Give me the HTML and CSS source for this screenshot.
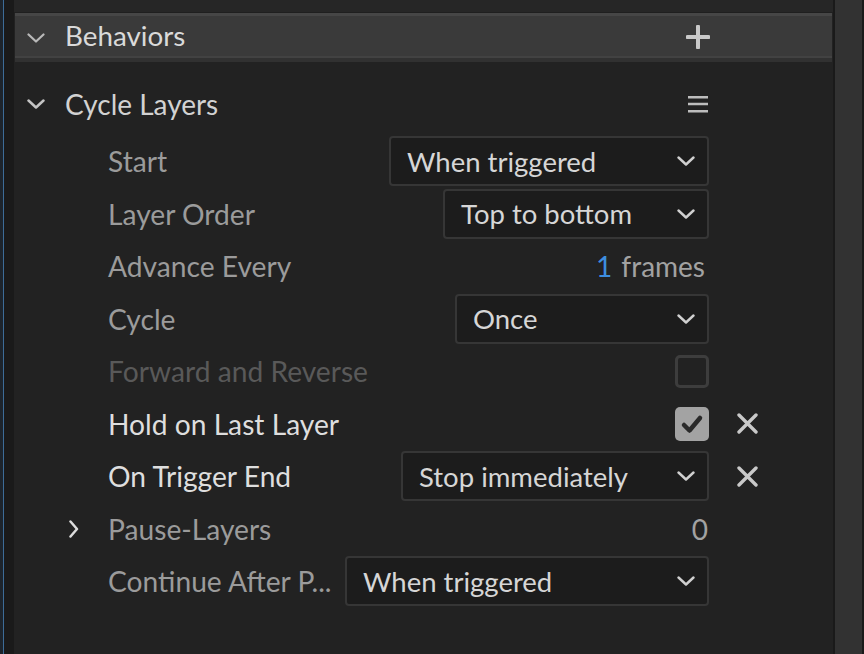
FILE: index.html
```html
<!DOCTYPE html>
<html>
<head>
<meta charset="utf-8">
<link rel="stylesheet" href="styles.css">
</head>
<body>
<div class="app">
  <div class="edge"></div>
  <div class="gutter"></div>
  <div class="panel">
    <div class="topstrip"></div>
    <div class="section-head">
      <svg class="chev-down" width="18" height="10" viewBox="0 0 18 10"><polyline points="1.5,1.5 9,8.5 16.5,1.5" fill="none" stroke="#b9b9b9" stroke-width="2.2" stroke-linecap="round" stroke-linejoin="round"/></svg>
      <span class="section-title">Behaviors</span>
      <svg class="plus" width="24" height="24" viewBox="0 0 24 24"><path d="M12 1.5V22.5M1.5 12H22.5" stroke="#c9c9c9" stroke-width="4" stroke-linecap="round"/></svg>
    </div>
    <div class="group-head">
      <svg class="chev-down" width="18" height="10" viewBox="0 0 18 10"><polyline points="1.5,1.5 9,8.5 16.5,1.5" fill="none" stroke="#c4c4c4" stroke-width="2.5" stroke-linecap="round" stroke-linejoin="round"/></svg>
      <span class="group-title">Cycle Layers</span>
      <svg class="menu" width="20" height="18" viewBox="0 0 20 18"><path d="M0 2.2H20M0 9H20M0 16.2H20" stroke="#bdbdbd" stroke-width="2.6"/></svg>
    </div>
    <div class="props">
      <div class="row">
        <div class="indent"></div>
        <span class="label">Start</span>
        <div class="dropdown dd-start"><span>When triggered</span><svg width="18" height="10" viewBox="0 0 18 10"><polyline points="1.5,1.5 9,8.5 16.5,1.5" fill="none" stroke="#d0d0d0" stroke-width="2.4" stroke-linecap="round" stroke-linejoin="round"/></svg></div>
        <div class="xcol"></div>
      </div>
      <div class="row">
        <div class="indent"></div>
        <span class="label">Layer Order</span>
        <div class="dropdown dd-order"><span>Top to bottom</span><svg width="18" height="10" viewBox="0 0 18 10"><polyline points="1.5,1.5 9,8.5 16.5,1.5" fill="none" stroke="#d0d0d0" stroke-width="2.4" stroke-linecap="round" stroke-linejoin="round"/></svg></div>
        <div class="xcol"></div>
      </div>
      <div class="row">
        <div class="indent"></div>
        <span class="label">Advance Every</span>
        <div class="value frames"><span class="num">1</span> frames</div>
        <div class="xcol"></div>
      </div>
      <div class="row">
        <div class="indent"></div>
        <span class="label">Cycle</span>
        <div class="dropdown dd-cycle"><span>Once</span><svg width="18" height="10" viewBox="0 0 18 10"><polyline points="1.5,1.5 9,8.5 16.5,1.5" fill="none" stroke="#d0d0d0" stroke-width="2.4" stroke-linecap="round" stroke-linejoin="round"/></svg></div>
        <div class="xcol"></div>
      </div>
      <div class="row">
        <div class="indent"></div>
        <span class="label dim">Forward and Reverse</span>
        <div class="checkbox"></div>
        <div class="xcol"></div>
      </div>
      <div class="row">
        <div class="indent"></div>
        <span class="label bright">Hold on Last Layer</span>
        <div class="checkbox checked"><svg width="34" height="34" viewBox="0 0 34 34"><polyline points="9,18 14.5,23.5 25,11" fill="none" stroke="#2a2a2a" stroke-width="4.5" stroke-linecap="round" stroke-linejoin="round"/></svg></div>
        <div class="xcol"><svg width="21" height="21" viewBox="0 0 21 21"><path d="M2 2L19 19M19 2L2 19" stroke="#c9c9c9" stroke-width="3.4" stroke-linecap="round"/></svg></div>
      </div>
      <div class="row">
        <div class="indent"></div>
        <span class="label bright">On Trigger End</span>
        <div class="dropdown dd-end"><span>Stop immediately</span><svg width="18" height="10" viewBox="0 0 18 10"><polyline points="1.5,1.5 9,8.5 16.5,1.5" fill="none" stroke="#d0d0d0" stroke-width="2.4" stroke-linecap="round" stroke-linejoin="round"/></svg></div>
        <div class="xcol"><svg width="21" height="21" viewBox="0 0 21 21"><path d="M2 2L19 19M19 2L2 19" stroke="#c9c9c9" stroke-width="3.4" stroke-linecap="round"/></svg></div>
      </div>
      <div class="row">
        <div class="indent"><svg class="twisty" width="10" height="18" viewBox="0 0 10 18"><polyline points="1.5,1.5 8,9 1.5,16.5" fill="none" stroke="#dcdcdc" stroke-width="2.5" stroke-linecap="round" stroke-linejoin="round"/></svg></div>
        <span class="label">Pause-Layers</span>
        <div class="value">0</div>
        <div class="xcol"></div>
      </div>
      <div class="row">
        <div class="indent"></div>
        <span class="label">Continue After P...</span>
        <div class="dropdown dd-continue"><span>When triggered</span><svg width="18" height="10" viewBox="0 0 18 10"><polyline points="1.5,1.5 9,8.5 16.5,1.5" fill="none" stroke="#d0d0d0" stroke-width="2.4" stroke-linecap="round" stroke-linejoin="round"/></svg></div>
        <div class="xcol"></div>
      </div>
    </div>
  </div>
  <div class="scroll"></div>
</div>
</body>
</html>
```

FILE: styles.css
```css
html, body {
  margin: 0;
  padding: 0;
  background: #222222;
}
body {
  width: 864px;
  height: 654px;
  overflow: hidden;
  font-family: Lato, "Liberation Sans", sans-serif;
  font-size: 27.5px;
}
.app {
  display: flex;
  width: 864px;
  height: 654px;
}
.edge {
  width: 3px;
  background: #1d242c;
  border-right: 1px solid #3d6c98;
}
.gutter {
  width: 10px;
  background: #1a1a1a;
}
.panel {
  width: 819px;
  background: #222222;
  display: flex;
  flex-direction: column;
}
.topstrip {
  height: 12px;
  background: #262626;
  border-bottom: 1px solid #1f1f1f;
}
.section-head {
  margin: 0 1px;
  height: 49px;
  box-sizing: border-box;
  background: #3a3a3a;
  border-top: 3px solid #464646;
  border-bottom: 4px solid #313131;
  box-shadow: inset 0 -2px 0 #424242;
  display: flex;
  align-items: center;
  padding: 0 122px 0 12px;
}
.section-head .chev-down {
  margin-top: 1px;
}
.section-title {
  margin-left: 20px;
  margin-top: -2px;
  flex: 1;
  color: #dadada;
  line-height: 1;
  font-size: 27.8px;
}
.plus {
  display: block;
}
.group-head {
  margin-top: 16px;
  height: 52px;
  display: flex;
  align-items: center;
  padding: 0 125px 0 13px;
  font-size: 28px;
}
.group-title {
  margin-left: 20px;
  flex: 1;
  color: #d2d2d2;
}
.menu {
  display: block;
}
.props {
  margin-top: 5px;
  display: flex;
  flex-direction: column;
}
.row {
  height: 52.5px;
  display: flex;
  align-items: center;
  padding-right: 74px;
}
.indent {
  width: 94px;
  flex: none;
  display: flex;
  align-items: center;
  padding-left: 55px;
  box-sizing: border-box;
}
.twisty {
  display: block;
}
.label {
  flex: 1;
  color: #9b9b9b;
  white-space: nowrap;
  font-size: 28.2px;
}
.label.dim {
  color: #595959;
}
.label.bright {
  color: #dedede;
}
.xcol {
  width: 50px;
  flex: none;
  display: flex;
  align-items: center;
  padding-left: 28px;
  box-sizing: border-box;
}
.xcol svg {
  display: block;
}
.dropdown {
  height: 50px;
  box-sizing: border-box;
  border: 2px solid #363636;
  border-radius: 4px;
  background: #1c1c1c;
  display: flex;
  align-items: center;
  justify-content: space-between;
  padding: 0 12px 0 16px;
  color: #d6d6d6;
  font-size: 27.5px;
}
.dropdown svg {
  display: block;
  flex: none;
}
.dd-start { width: 320px; }
.dd-order { width: 266px; }
.dd-cycle { width: 254px; }
.dd-end { width: 308px; }
.dd-continue { width: 364px; }
.value {
  color: #a2a2a2;
  white-space: nowrap;
  font-size: 28px;
  margin-right: 1px;
}
.value.frames {
  margin-right: 4px;
}
.num {
  color: #3d8ee0;
  margin-right: 2px;
}
.checkbox {
  width: 34px;
  height: 33px;
  box-sizing: border-box;
  border: 3px solid #3d3d3d;
  border-radius: 5px;
}
.checkbox.checked {
  border: none;
  background: #a3a3a3;
  height: 34px;
}
.checkbox svg {
  display: block;
}
.scroll {
  width: 27px;
  background: #323232;
  border-left: 2px solid #1a1a1a;
  border-right: 2px solid #1a1a1a;
}
```
